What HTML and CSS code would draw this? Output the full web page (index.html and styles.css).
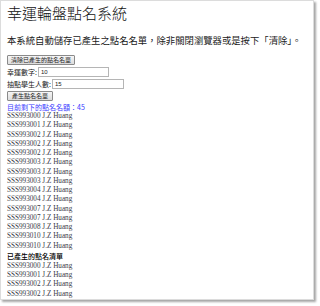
FILE: index.html
```html
<!DOCTYPE html>
<html lang="zh-Hant">
<head>
<meta charset="utf-8">
<title>幸運輪盤點名系統</title>
<link rel="stylesheet" href="styles.css">
</head>
<body>
<div class="card">
  <h1 class="title">幸運輪盤點名系統</h1>
  <p class="intro">本系統自動儲存已產生之點名名單，除非關閉瀏覽器或是按下「清除」。</p>
  <button class="btn btn-clear">清除已產生的點名名單</button>
  <div class="field"><label class="lbl">幸運數字:</label><input class="inp inp-1" value="10"></div>
  <div class="field"><label class="lbl">抽點學生人數:</label><input class="inp inp-2" value="15"></div>
  <button class="btn btn-gen">產生點名名單</button>
  <div class="remain">目前剩下的點名名額：45</div>
  <ul class="list">
    <li>SSS993000 J.Z Huang</li>
    <li>SSS993001 J.Z Huang</li>
    <li>SSS993002 J.Z Huang</li>
    <li>SSS993002 J.Z Huang</li>
    <li>SSS993002 J.Z Huang</li>
    <li>SSS993003 J.Z Huang</li>
    <li>SSS993003 J.Z Huang</li>
    <li>SSS993003 J.Z Huang</li>
    <li>SSS993004 J.Z Huang</li>
    <li>SSS993004 J.Z Huang</li>
    <li>SSS993007 J.Z Huang</li>
    <li>SSS993007 J.Z Huang</li>
    <li>SSS993008 J.Z Huang</li>
    <li>SSS993010 J.Z Huang</li>
    <li>SSS993010 J.Z Huang</li>
  </ul>
  <div class="subhead">已產生的點名清單</div>
  <ul class="list">
    <li>SSS993000 J.Z Huang</li>
    <li>SSS993001 J.Z Huang</li>
    <li>SSS993002 J.Z Huang</li>
    <li>SSS993002 J.Z Huang</li>
  </ul>
</div>
</body>
</html>
```

FILE: styles.css
```css
html, body {
  margin: 0;
  padding: 0;
  background: #ffffff;
}

body {
  width: 320px;
  height: 306px;
  overflow: hidden;
}

.card {
  box-sizing: border-box;
  width: 314px;
  height: 300px;
  border: 1px solid #dcdcdc;
  box-shadow: 2px 2px 2px rgba(0, 0, 0, 0.35);
  padding: 0 0 0 6px;
  overflow: hidden;
  font-family: "Liberation Serif", "Noto Sans CJK TC", serif;
  color: #222;
  display: flex;
  flex-direction: column;
  align-items: flex-start;
}

.title {
  margin: 2px 0 0 0;
  font-family: "Noto Sans CJK TC", sans-serif;
  font-weight: 300;
  font-size: 15px;
  line-height: 20px;
  color: #111;
}

.intro {
  margin: 11px 0 0 0;
  font-family: "Noto Sans CJK TC", sans-serif;
  font-size: 9.35px;
  line-height: 12px;
  color: #222;
  white-space: nowrap;
}

.btn {
  box-sizing: border-box;
  margin: 9px 0 0 0;
  padding: 0 2px;
  height: 10px;
  font-family: "Noto Sans CJK TC", sans-serif;
  font-size: 6px;
  line-height: 8px;
  color: #222;
  border: 1px solid #8a8a8a;
  border-radius: 1px;
  background: linear-gradient(#f6f6f6, #dcdcdc);
  white-space: nowrap;
}

.btn-clear {
  width: 68px;
}

.btn-gen {
  width: 46px;
  margin-top: 2px;
}

.field {
  display: flex;
  align-items: center;
  margin-top: 2px;
  height: 10px;
}

.field + .field {
  margin-top: 2px;
}

.lbl {
  font-family: "Noto Sans CJK TC", sans-serif;
  font-size: 7px;
  line-height: 10px;
  color: #222;
  white-space: nowrap;
}

.inp {
  box-sizing: border-box;
  margin: 0 0 0 1px;
  padding: 0 2px;
  height: 10px;
  border: 1px solid #b5b5b5;
  font-family: "Liberation Sans", sans-serif;
  font-size: 6px;
  line-height: 8px;
  color: #222;
  background: #fff;
}

.inp-1 {
  width: 71px;
}

.inp-2 {
  width: 72px;
}

.remain {
  margin-top: 1px;
  font-family: "Noto Sans CJK TC", sans-serif;
  font-size: 7px;
  line-height: 10px;
  color: #3a3aff;
  white-space: nowrap;
}

.list {
  list-style: none;
  margin: 0;
  padding: 0;
}

.list li {
  font-family: "Liberation Serif", serif;
  font-size: 7.2px;
  line-height: 9.25px;
  height: 9.25px;
  color: #3a3a48;
  white-space: nowrap;
}

.subhead {
  font-family: "Noto Sans CJK TC", sans-serif;
  font-weight: 500;
  font-size: 7px;
  line-height: 11px;
  color: #000;
  white-space: nowrap;
}
```
